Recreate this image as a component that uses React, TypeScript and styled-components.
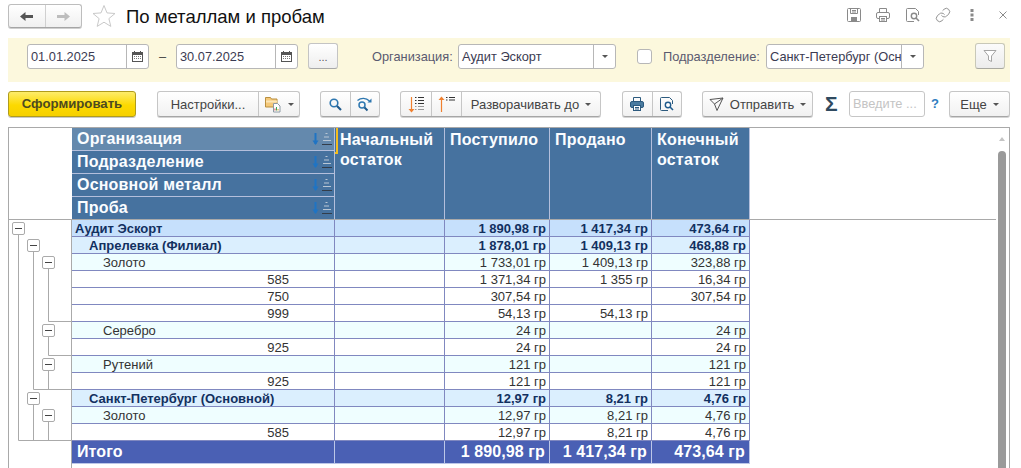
import React from 'react';
import styled, { createGlobalStyle } from 'styled-components';
import { Link } from 'lucide-react';

const GlobalStyle = createGlobalStyle`
    html, body {
        margin: 0;
        padding: 0;
        background: #fff;
        overflow: hidden;
        font-family: 'Liberation Sans', Arial, sans-serif;
    }
`;

type RowKind = 'org' | 'branch' | 'metal' | 'plain' | 'total';

type ReportRow = {
    kind: RowKind;
    name: string;
    income?: string;
    sold?: string;
    rest?: string;
};

const rows: ReportRow[] = [
    { kind: 'org', name: 'Аудит Эскорт', income: '1 890,98 гр', sold: '1 417,34 гр', rest: '473,64 гр' },
    { kind: 'branch', name: 'Апрелевка (Филиал)', income: '1 878,01 гр', sold: '1 409,13 гр', rest: '468,88 гр' },
    { kind: 'metal', name: 'Золото', income: '1 733,01 гр', sold: '1 409,13 гр', rest: '323,88 гр' },
    { kind: 'plain', name: '585', income: '1 371,34 гр', sold: '1 355 гр', rest: '16,34 гр' },
    { kind: 'plain', name: '750', income: '307,54 гр', rest: '307,54 гр' },
    { kind: 'plain', name: '999', income: '54,13 гр', sold: '54,13 гр' },
    { kind: 'metal', name: 'Серебро', income: '24 гр', rest: '24 гр' },
    { kind: 'plain', name: '925', income: '24 гр', rest: '24 гр' },
    { kind: 'metal', name: 'Рутений', income: '121 гр', rest: '121 гр' },
    { kind: 'plain', name: '925', income: '121 гр', rest: '121 гр' },
    { kind: 'branch', name: 'Санкт-Петербург (Основной)', income: '12,97 гр', sold: '8,21 гр', rest: '4,76 гр' },
    { kind: 'metal', name: 'Золото', income: '12,97 гр', sold: '8,21 гр', rest: '4,76 гр' },
    { kind: 'plain', name: '585', income: '12,97 гр', sold: '8,21 гр', rest: '4,76 гр' },
    { kind: 'total', name: 'Итого', income: '1 890,98 гр', sold: '1 417,34 гр', rest: '473,64 гр' },
];

const rowBackground: Record<RowKind, string> = {
    org: '#c6e0fc',
    branch: '#dbeffe',
    metal: '#effeff',
    plain: '#ffffff',
    total: '#4a60b4',
};

const Page = styled.div`
    width: 1021px;
    height: 468px;
    overflow: hidden;
    display: flex;
    flex-direction: column;
    color: #333;
`;

const TitleBar = styled.header`
    height: 38px;
    flex: none;
    display: flex;
    align-items: flex-start;
    padding: 4px 0 0 8px;
    box-sizing: border-box;
`;

const NavGroup = styled.div`
    width: 74px;
    height: 24px;
    display: flex;
    box-sizing: border-box;
    border: 1px solid #bdbdbd;
    border-bottom-color: #a5a5a5;
    border-radius: 3px;
    background: linear-gradient(#ffffff, #f0f0f0);
    box-shadow: 0 1px 0 #cfcfcf;
`;

const NavCell = styled.div<{ $divided?: boolean }>`
    flex: 1;
    display: flex;
    align-items: center;
    justify-content: center;
    border-left: ${(p) => (p.$divided ? '1px solid #d0d0d0' : 'none')};
`;

const StarSlot = styled.div`
    width: 24px;
    height: 24px;
    margin: 0 0 0 10px;
`;

const PageTitle = styled.h1`
    margin: 1px 0 0 10px;
    font-size: 18.5px;
    line-height: 24px;
    font-weight: 400;
    color: #111;
    white-space: nowrap;
`;

const WindowTools = styled.div`
    margin-left: auto;
    height: 22px;
    padding-right: 14px;
    display: flex;
    align-items: center;
`;

const ToolSlot = styled.span<{ $gap: number }>`
    margin-left: ${(p) => p.$gap}px;
    display: flex;
    align-items: center;
`;

const FilterBand = styled.section`
    width: 1002px;
    height: 44px;
    flex: none;
    margin-left: 8px;
    background: #fcf8dd;
    display: flex;
    align-items: flex-start;
    padding: 6px 0 0 19px;
    box-sizing: border-box;
    font-size: 12.8px;
`;

const FieldBox = styled.div<{ $width: number }>`
    width: ${(p) => p.$width}px;
    height: 25px;
    flex: none;
    display: flex;
    box-sizing: border-box;
    border: 1px solid #b7b7b7;
    border-radius: 3px;
    background: #fff;
    color: #333;
    overflow: hidden;
`;

const FieldText = styled.div`
    flex: 1;
    min-width: 0;
    overflow: hidden;
    white-space: nowrap;
    padding-left: 3px;
    line-height: 23px;
    font-size: 12.8px;
    color: #3b3b52;
`;

const FieldAddon = styled.div`
    width: 21px;
    border-left: 1px solid #b7b7b7;
    display: flex;
    align-items: center;
    justify-content: center;
    flex: none;
`;

const Dash = styled.span`
    width: 27px;
    flex: none;
    text-align: center;
    line-height: 25px;
    color: #444;
`;

const DotsButton = styled.div`
    width: 30px;
    height: 26px;
    flex: none;
    margin: -1px 0 0 10px;
    box-sizing: border-box;
    border: 1px solid #c4c4c4;
    border-bottom-color: #a8a8a8;
    border-radius: 3px;
    background: linear-gradient(#ffffff, #eeeeee);
    text-align: center;
    line-height: 26px;
    font-size: 11px;
    color: #555;
`;

const FieldLabel = styled.span<{ $gap: number; $width: number }>`
    margin-left: ${(p) => p.$gap}px;
    width: ${(p) => p.$width}px;
    flex: none;
    white-space: nowrap;
    line-height: 25px;
    color: #5a5a70;
`;

const CheckBox = styled.div`
    width: 15px;
    height: 15px;
    flex: none;
    margin: 5px 0 0 21px;
    box-sizing: border-box;
    border: 1px solid #b7b7b7;
    border-radius: 3px;
    background: #fff;
`;

const FilterButton = styled.div`
    width: 30px;
    height: 26px;
    flex: none;
    margin: -1px 0 0 51px;
    box-sizing: border-box;
    border: 1px solid #c8c8b8;
    border-bottom-color: #a8a8a0;
    border-radius: 3px;
    background: linear-gradient(#fbfbfb, #ececec);
    display: flex;
    align-items: center;
    justify-content: center;
`;

const CommandBar = styled.nav`
    height: 26px;
    flex: none;
    margin-top: 9px;
    padding-left: 8px;
    display: flex;
    align-items: stretch;
    font-size: 13px;
    color: #444;
`;

const PrimaryButton = styled.div`
    width: 128px;
    flex: none;
    box-sizing: border-box;
    border: 1px solid #b09c1c;
    border-radius: 3px;
    background: linear-gradient(#fdec6b, #fcd900 55%, #f6d000);
    box-shadow: 0 1px 0 #c8c8c8;
    text-align: center;
    line-height: 24px;
    font-size: 13.2px;
    font-weight: 700;
    color: #4d4a20;
`;

const ButtonGroup = styled.div<{ $width: number; $gap: number }>`
    width: ${(p) => p.$width}px;
    margin-left: ${(p) => p.$gap}px;
    flex: none;
    display: flex;
    box-sizing: border-box;
    border: 1px solid #c6c6c6;
    border-bottom-color: #a6a6a6;
    border-radius: 3px;
    background: linear-gradient(#ffffff, #f1f1f1);
    box-shadow: 0 1px 0 #d4d4d4;
`;

const ButtonPart = styled.div<{ $width?: number; $divided?: boolean }>`
    width: ${(p) => (p.$width ? `${p.$width}px` : 'auto')};
    flex: ${(p) => (p.$width ? 'none' : 1)};
    box-sizing: border-box;
    border-left: ${(p) => (p.$divided ? '1px solid #c6c6c6' : 'none')};
    display: flex;
    align-items: center;
    justify-content: center;
    gap: 6px;
    white-space: nowrap;
`;

const Caret = styled.span`
    width: 0;
    height: 0;
    border-left: 3px solid transparent;
    border-right: 3px solid transparent;
    border-top: 3px solid #555;
    flex: none;
`;

const SigmaMark = styled.span`
    width: 13px;
    margin-left: 12px;
    flex: none;
    font-size: 21px;
    font-weight: 700;
    line-height: 26px;
    color: #2f4a60;
`;

const SearchBox = styled.div`
    width: 76px;
    margin-left: 11px;
    flex: none;
    box-sizing: border-box;
    border: 1px solid #c6c6c6;
    border-radius: 3px;
    padding-left: 3px;
    font-size: 12.8px;
    line-height: 24px;
    color: #c4c4c4;
    white-space: nowrap;
`;

const HelpMark = styled.span`
    width: 6px;
    margin-left: 6px;
    flex: none;
    font-weight: 700;
    font-size: 13px;
    line-height: 26px;
    color: #2f7dc0;
`;

const ReportFrame = styled.section`
    width: 1002px;
    height: 341px;
    margin: 10px 0 0 8px;
    flex: none;
    box-sizing: border-box;
    border-top: 1px solid #a9a9a9;
    border-left: 1px solid #a9a9a9;
    border-right: 1px solid #a9a9a9;
    display: flex;
    overflow: hidden;
`;

const ReportBody = styled.div`
    width: 987px;
    flex: none;
`;

const HeadArea = styled.div`
    height: 92px;
    display: flex;
    box-sizing: border-box;
    border-bottom: 1px solid #a9a9a9;
`;

const GutterHead = styled.div`
    width: 63px;
    flex: none;
`;

const FieldStack = styled.div`
    width: 263px;
    flex: none;
    display: flex;
    flex-direction: column;
    background: #46729f;
`;

const HeadField = styled.div<{ $active?: boolean }>`
    position: relative;
    height: 23px;
    flex: none;
    box-sizing: border-box;
    display: flex;
    align-items: center;
    justify-content: space-between;
    padding: 0 1px 0 5px;
    font-size: 16px;
    font-weight: 700;
    letter-spacing: 0.2px;
    color: #fbfdff;
    background: ${(p) => (p.$active ? '#6489ad' : '#46729f')};
    border-bottom: 1px solid #b4bfdc;
    border-right: 1px solid #b4bfdc;

    &:last-child {
        height: 22px;
        border-bottom: none;
    }

    /* focus frame of the current field lies over its neighbours */
    ${(p) =>
        p.$active &&
        `
        &::after {
            content: '';
            position: absolute;
            left: 0;
            top: -1px;
            right: -4px;
            bottom: -4px;
            border-right: 2px solid #f5bd1d;
            border-bottom: 2px solid #f5bd1d;
        }
    `}
`;

const HeadColumn = styled.div<{ $width: number }>`
    width: ${(p) => p.$width}px;
    flex: none;
    box-sizing: border-box;
    padding: 2px 0 0 5px;
    background: #46729f;
    border-right: 1px solid #b4bfdc;
    font-size: 16px;
    font-weight: 700;
    line-height: 20px;
    letter-spacing: 0.2px;
    color: #fbfdff;
`;

const BodyArea = styled.div`
    display: flex;
`;

const TreeGutter = styled.div`
    width: 63px;
    flex: none;
`;

const RowList = styled.div`
    width: 678px;
    flex: none;
`;

const DataRow = styled.div<{ $kind: RowKind }>`
    display: grid;
    grid-template-columns: 263px 110px 105px 102px 98px;
    height: ${(p) => (p.$kind === 'total' ? 23 : 17)}px;
    box-sizing: border-box;
    background: ${(p) => rowBackground[p.$kind]};
    border-bottom: 1px solid ${(p) => (p.$kind === 'total' ? '#bcc7e8' : '#8088c0')};
    font-size: ${(p) => (p.$kind === 'total' ? 16 : 13)}px;
    font-weight: ${(p) => (p.$kind === 'org' || p.$kind === 'branch' || p.$kind === 'total' ? 700 : 400)};
    color: ${(p) =>
        p.$kind === 'total' ? '#fff' : p.$kind === 'org' || p.$kind === 'branch' ? '#12305f' : '#333'};
    line-height: ${(p) => (p.$kind === 'total' ? 22 : 17)}px;
`;

const Cell = styled.div<{ $total?: boolean }>`
    box-sizing: border-box;
    text-align: right;
    padding-right: ${(p) => (p.$total ? 4 : 3)}px;
    border-right: 1px solid ${(p) => (p.$total ? '#bcc7e8' : '#8088c0')};
    letter-spacing: ${(p) => (p.$total ? '0.1px' : 0)};
    white-space: nowrap;
`;

const NameCell = styled(Cell)<{ $indent: number; $proba?: boolean }>`
    text-align: ${(p) => (p.$proba ? 'right' : 'left')};
    padding-left: ${(p) => p.$indent}px;
    padding-right: ${(p) => (p.$proba ? 45 : 0)}px;
`;

const ScrollColumn = styled.div`
    flex: 1;
    position: relative;
`;

const ScrollArrow = styled.span`
    position: absolute;
    left: 3px;
    top: 9px;
    width: 0;
    height: 0;
    border-left: 3px solid transparent;
    border-right: 3px solid transparent;
    border-bottom: 4px solid #c4c4c4;
`;

const ScrollThumb = styled.div`
    position: absolute;
    left: 2px;
    top: 23px;
    width: 8px;
    bottom: 0;
    background: #9a9a9a;
    border-radius: 4px 4px 0 0;
`;

const NavArrow: React.FC<{ color: string; left?: boolean }> = ({ color, left }) => (
    <svg width="15" height="11" viewBox="0 0 15 11">
        <path
            d={left ? 'M1 5.5 6.5 1v3H14v3H6.5v3z' : 'M14 5.5 8.5 1v3H1v3h7.5v3z'}
            fill={color}
        />
    </svg>
);

const StarIcon = () => (
    <svg width="24" height="24" viewBox="0 0 24 24">
        <path
            d="M12 1.5l3 7.4 8 .6-6.1 5.1 1.9 7.8L12 18.2 5.2 22.400l1.900-7.800L1 9.500l8-.6z"
            fill="#fff"
            stroke="#c9c9c9"
            strokeWidth="1"
        />
    </svg>
);

const SaveIcon = () => (
    <svg width="16" height="16" viewBox="0 0 16 16" fill="none" stroke="#8a8a8a">
        <rect x="1.5" y="1.5" width="13" height="13" rx="1" />
        <path d="M4.5 2v4.5h7V2M6 3.500h4M6 5h4" />
        <rect x="5" y="10" width="6" height="4.5" fill="#8a8a8a" stroke="none" />
    </svg>
);

const PrinterIcon: React.FC<{ color?: string; fill?: string }> = ({ color = '#8a8a8a', fill = 'none' }) => (
    <svg width="16" height="16" viewBox="0 0 16 16" fill="none" stroke={color}>
        <path d="M4.5 5V1.500h7V5" />
        <rect x="1.5" y="5.5" width="13" height="6" rx="1.5" fill={fill} />
        <rect x="4.5" y="9.5" width="7" height="5" fill="#fff" />
        <path d="M6 11.500h4M6 13h4" />
    </svg>
);

const PreviewIcon: React.FC<{ color?: string; lens?: string }> = ({ color = '#8a8a8a', lens = '#8a8a8a' }) => (
    <svg width="16" height="16" viewBox="0 0 16 16" fill="none">
        <path d="M9 14.5H2.500a1 1 0 0 1-1-1v-11a1 1 0 0 1 1-1h8l3 3V8" stroke={color} />
        <circle cx="9" cy="9" r="2.7" stroke={lens} strokeWidth="1.4" fill="#fff" />
        <path d="M11 11l3 3" stroke={lens} strokeWidth="1.6" />
    </svg>
);

const DotsIcon = () => (
    <svg width="4" height="14" viewBox="0 0 4 14" fill="#8a8a8a">
        <rect x="0.5" y="1" width="3" height="3" />
        <rect x="0.5" y="5.5" width="3" height="3" />
        <rect x="0.5" y="10" width="3" height="3" />
    </svg>
);

const CloseIcon = () => (
    <svg width="8" height="8" viewBox="0 0 8 8" stroke="#8a8a8a" strokeWidth="1">
        <path d="M.5.5l7 7M7.5.5l-7 7" />
    </svg>
);

const CalendarIcon = () => (
    <svg width="11" height="11" viewBox="0 0 11 11">
        <rect x="0.5" y="1.5" width="10" height="9" fill="#fff" stroke="#555" />
        <rect x="0.5" y="1.5" width="10" height="2.5" fill="#555" />
        <path d="M2.5 0v2M8.500 0v2" stroke="#555" />
        <path d="M2 5.500h7M2 7.500h7" stroke="#777" strokeDasharray="1 1" />
    </svg>
);

const FunnelIcon = () => (
    <svg width="14" height="14" viewBox="0 0 14 14">
        <path d="M1 1.5h12L8.500 7v5.500L5.500 11V7z" fill="#fff" stroke="#a4a4a4" />
    </svg>
);

const ReportOptionsIcon = () => (
    <svg width="17" height="17" viewBox="0 0 17 17">
        <path d="M.5 3V1.500h5l1 1.500h5.500v8H.5z" fill="#f5c97a" stroke="#b98f3f" />
        <rect x="1" y="4.5" width="11" height="2" fill="#fbe6b8" />
        <path d="M8.5 7.500h4l2.500 2.500v6h-6.500z" fill="#fff" stroke="#8d99a3" />
        <path d="M10 14.500v-2" stroke="#d34040" />
        <path d="M11.5 14.500v-3.500" stroke="#3aa655" />
        <path d="M13 14.500v-1.500" stroke="#e0a020" />
    </svg>
);

const SearchIcon = () => (
    <svg width="15" height="15" viewBox="0 0 15 15" fill="none">
        <circle cx="6" cy="6" r="3.8" stroke="#2e77b0" strokeWidth="1.6" />
        <path d="M9 9l4 4" stroke="#1f5a8c" strokeWidth="2.2" />
    </svg>
);

const SearchNextIcon = () => (
    <svg width="17" height="15" viewBox="0 0 17 15" fill="none">
        <circle cx="6" cy="8" r="3" stroke="#2e77b0" strokeWidth="1.5" />
        <path d="M8.5 10.500l3 3" stroke="#1f5a8c" strokeWidth="2" />
        <path d="M1.5 3.500C5 .5 10 .5 13.500 4" stroke="#2e77b0" strokeWidth="1.3" />
        <path d="M15.5 1.500v4h-4z" fill="#2e77b0" />
    </svg>
);

const OrderIcon: React.FC<{ up?: boolean }> = ({ up }) => (
    <svg width="17" height="17" viewBox="0 0 17 17" fill="none">
        {up ? (
            <>
                <path d="M3.5 16V3" stroke="#f08030" strokeWidth="1.2" />
                <path d="M.5 4l3-3.500 3 3.500z" fill="#f08030" />
                <path d="M8 1.500h1.500M8 4h1.500M11 1.500h6M11 4h6" stroke="#333" strokeWidth="1.1" />
            </>
        ) : (
            <>
                <path d="M3.5 1v13" stroke="#f08030" strokeWidth="1.2" />
                <path d="M.5 13l3 3.500 3-3.500z" fill="#f08030" />
                <path d="M7 1.500h1.500M10 1.500h6M7 4.500h1.500M10 4.500h6M7 7.500h1.500M10 7.500h6" stroke="#333" strokeWidth="1.1" />
                <path d="M7 10.500h1.500M10 10.500h6M7 13.500h1.500M10 13.500h6" stroke="#999" strokeWidth="1.1" />
            </>
        )}
    </svg>
);

const SortMark = () => (
    <svg width="22" height="16" viewBox="0 0 22 16" fill="none">
        <path d="M4.5 2v11" stroke="#1f74c4" strokeWidth="2" />
        <path d="M1.5 9.500h6l-3 4.500z" fill="#1f74c4" />
        <path d="M14.5 2.500h2M13 6h5M12 9.500h8" stroke="#b9c6d4" />
        <path d="M11 13.500h10" stroke="#333d4a" />
    </svg>
);

const SendIcon = () => (
    <svg width="15" height="15" viewBox="0 0 15 15" fill="none" stroke="#555">
        <path d="M1 2.5l13-1.500-6 12.500-2.500-6.500zM5.500 7L14 1" />
    </svg>
);

// Toggle boxes and connector lines of the row groups
const TreeDrawing = () => {
    const boxes: [number, number][] = [
        [9, 228], [24, 245], [39, 262], [39, 330], [39, 364], [24, 398], [39, 415],
    ];
    return (
        <svg width="63" height="248" viewBox="0 220 63 248" style={{ display: 'block' }}>
            <g stroke="#aaa" fill="none">
                <path d="M62.5 220V468" />
                <path d="M9.5 234V440.5H63" />
                <path d="M24.5 251V389.5H63M24.5 404V440" />
                <path d="M39.5 268V321.5H63M39.5 336V355.5H63M39.5 370V389M39.5 421V440" />
            </g>
            {boxes.map(([x, y]) => (
                <g key={`${x}-${y}`}>
                    <rect x={x - 5.5} y={y - 5.5} width="12" height="12" rx="1.5" fill="#fff" stroke="#aaa" />
                    <path d={`M${x - 3} ${y + 0.5}H${x + 4}`} stroke="#444" />
                </g>
            ))}
        </svg>
    );
};

const nameIndent = (kind: RowKind) => {
    if (kind === 'branch') return 17;
    if (kind === 'metal') return 31;
    return kind === 'total' ? 5 : 3;
};

const App: React.FC = () => {
    return (
        <Page>
            <GlobalStyle />
            <TitleBar>
                <NavGroup>
                    <NavCell>
                        <NavArrow color="#555" left />
                    </NavCell>
                    <NavCell $divided>
                        <NavArrow color="#bdbdbd" />
                    </NavCell>
                </NavGroup>
                <StarSlot>
                    <StarIcon />
                </StarSlot>
                <PageTitle>По металлам и пробам</PageTitle>
                <WindowTools>
                    <ToolSlot $gap={0}>
                        <SaveIcon />
                    </ToolSlot>
                    <ToolSlot $gap={13}>
                        <PrinterIcon />
                    </ToolSlot>
                    <ToolSlot $gap={14}>
                        <PreviewIcon />
                    </ToolSlot>
                    <ToolSlot $gap={14}>
                        <Link size={16} color="#8a8a8a" strokeWidth={1.4} />
                    </ToolSlot>
                    <ToolSlot $gap={19}>
                        <DotsIcon />
                    </ToolSlot>
                    <ToolSlot $gap={25}>
                        <CloseIcon />
                    </ToolSlot>
                </WindowTools>
            </TitleBar>

            <FilterBand>
                <FieldBox $width={122}>
                    <FieldText>01.01.2025</FieldText>
                    <FieldAddon>
                        <CalendarIcon />
                    </FieldAddon>
                </FieldBox>
                <Dash>–</Dash>
                <FieldBox $width={122}>
                    <FieldText>30.07.2025</FieldText>
                    <FieldAddon>
                        <CalendarIcon />
                    </FieldAddon>
                </FieldBox>
                <DotsButton>...</DotsButton>
                <FieldLabel $gap={34} $width={86}>Организация:</FieldLabel>
                <FieldBox $width={158}>
                    <FieldText>Аудит Эскорт</FieldText>
                    <FieldAddon>
                        <Caret />
                    </FieldAddon>
                </FieldBox>
                <CheckBox />
                <FieldLabel $gap={11} $width={103}>Подразделение:</FieldLabel>
                <FieldBox $width={158}>
                    <FieldText>Санкт-Петербург (Осн</FieldText>
                    <FieldAddon>
                        <Caret />
                    </FieldAddon>
                </FieldBox>
                <FilterButton>
                    <FunnelIcon />
                </FilterButton>
            </FilterBand>

            <CommandBar>
                <PrimaryButton>Сформировать</PrimaryButton>
                <ButtonGroup $width={143} $gap={21}>
                    <ButtonPart>Настройки...</ButtonPart>
                    <ButtonPart $width={41} $divided>
                        <ReportOptionsIcon />
                        <Caret />
                    </ButtonPart>
                </ButtonGroup>
                <ButtonGroup $width={60} $gap={20}>
                    <ButtonPart>
                        <SearchIcon />
                    </ButtonPart>
                    <ButtonPart $divided>
                        <SearchNextIcon />
                    </ButtonPart>
                </ButtonGroup>
                <ButtonGroup $width={201} $gap={20}>
                    <ButtonPart $width={30}>
                        <OrderIcon />
                    </ButtonPart>
                    <ButtonPart $width={30} $divided>
                        <OrderIcon up />
                    </ButtonPart>
                    <ButtonPart $divided>
                        Разворачивать до
                        <Caret />
                    </ButtonPart>
                </ButtonGroup>
                <ButtonGroup $width={60} $gap={21}>
                    <ButtonPart>
                        <PrinterIcon color="#2c5a7e" fill="#4a7ba0" />
                    </ButtonPart>
                    <ButtonPart $divided>
                        <PreviewIcon color="#2c5a7e" lens="#1f5a8c" />
                    </ButtonPart>
                </ButtonGroup>
                <ButtonGroup $width={111} $gap={20}>
                    <ButtonPart>
                        <SendIcon />
                        Отправить
                        <Caret />
                    </ButtonPart>
                </ButtonGroup>
                <SigmaMark>Σ</SigmaMark>
                <SearchBox>Введите ...</SearchBox>
                <HelpMark>?</HelpMark>
                <ButtonGroup $width={61} $gap={12}>
                    <ButtonPart>
                        Еще
                        <Caret />
                    </ButtonPart>
                </ButtonGroup>
            </CommandBar>

            <ReportFrame>
                <ReportBody>
                    <HeadArea>
                        <GutterHead />
                        <FieldStack>
                            <HeadField $active>
                                Организация
                                <SortMark />
                            </HeadField>
                            <HeadField>
                                Подразделение
                                <SortMark />
                            </HeadField>
                            <HeadField>
                                Основной металл
                                <SortMark />
                            </HeadField>
                            <HeadField>
                                Проба
                                <SortMark />
                            </HeadField>
                        </FieldStack>
                        <HeadColumn $width={110}>
                            Начальный
                            <br />
                            остаток
                        </HeadColumn>
                        <HeadColumn $width={105}>Поступило</HeadColumn>
                        <HeadColumn $width={102}>Продано</HeadColumn>
                        <HeadColumn $width={98}>
                            Конечный
                            <br />
                            остаток
                        </HeadColumn>
                    </HeadArea>
                    <BodyArea>
                        <TreeGutter>
                            <TreeDrawing />
                        </TreeGutter>
                        <RowList>
                            {rows.map((row, i) => {
                                const total = row.kind === 'total';
                                return (
                                    <DataRow key={i} $kind={row.kind}>
                                        <NameCell
                                            $total={total}
                                            $indent={nameIndent(row.kind)}
                                            $proba={row.kind === 'plain'}
                                        >
                                            {row.name}
                                        </NameCell>
                                        <Cell $total={total} />
                                        <Cell $total={total}>{row.income}</Cell>
                                        <Cell $total={total}>{row.sold}</Cell>
                                        <Cell $total={total}>{row.rest}</Cell>
                                    </DataRow>
                                );
                            })}
                        </RowList>
                    </BodyArea>
                </ReportBody>
                <ScrollColumn>
                    <ScrollArrow />
                    <ScrollThumb />
                </ScrollColumn>
            </ReportFrame>
        </Page>
    );
};

export default App;
